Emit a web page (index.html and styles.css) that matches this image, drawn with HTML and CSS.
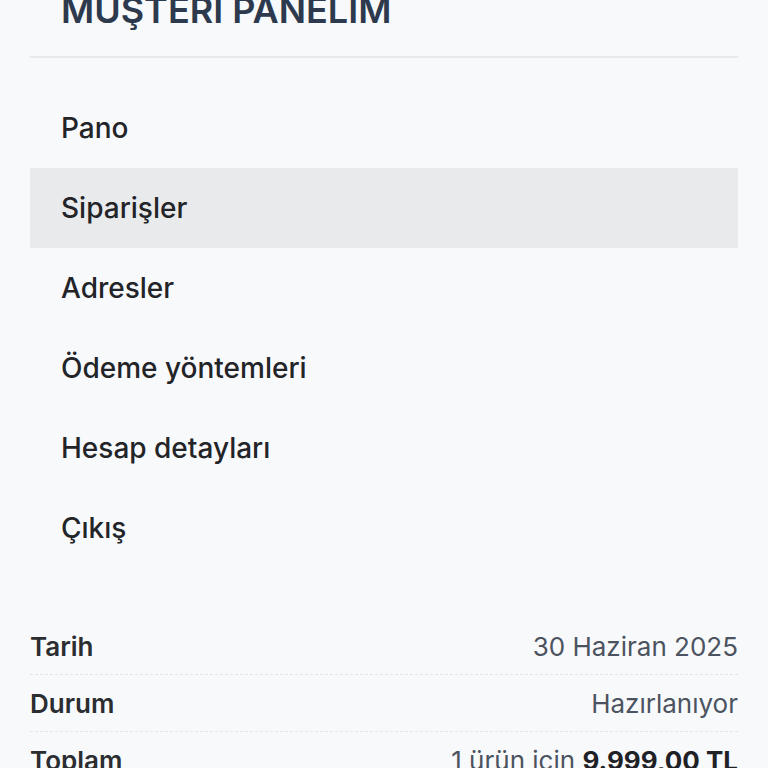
FILE: index.html
```html
<!DOCTYPE html>
<html lang="tr">
<head>
<meta charset="utf-8">
<link rel="stylesheet" href="styles.css">
</head>
<body>
<div class="page">
  <h1 class="title">MÜŞTERİ PANELİM</h1>
  <nav class="menu">
    <a class="menu-item">Pano</a>
    <a class="menu-item active">Siparişler</a>
    <a class="menu-item">Adresler</a>
    <a class="menu-item">Ödeme yöntemleri</a>
    <a class="menu-item">Hesap detayları</a>
    <a class="menu-item">Çıkış</a>
  </nav>
  <div class="order">
    <div class="row"><span class="label">Tarih</span><span class="value">30 Haziran 2025</span></div>
    <div class="row"><span class="label">Durum</span><span class="value">Hazırlanıyor</span></div>
    <div class="row"><span class="label">Toplam</span><span class="value">1 ürün için <b class="amount">9.999,00 TL</b></span></div>
  </div>
</div>
</body>
</html>
```
FILE: styles.css
```css
html, body {
  margin: 0;
  padding: 0;
  background: #f8f9fb;
  font-family: Inter, "Noto Sans", sans-serif;
}
.page {
  margin-top: -12px;
  padding: 0 30px 40px;
}
.title {
  margin: 0;
  padding: 0 0 24px 31px;
  font-size: 36px;
  line-height: 44px;
  font-weight: 600;
  color: #2d3a4e;
  border-bottom: 2px solid #e8e9ec;
}
.menu {
  display: flex;
  flex-direction: column;
  margin-top: 30px;
}
.menu-item {
  display: flex;
  align-items: center;
  height: 80px;
  padding-left: 31px;
  font-size: 28px;
  font-weight: 500;
  color: #222428;
}
.menu-item.active {
  background: #e9eaec;
}
.order {
  margin-top: 50px;
}
.row {
  display: flex;
  justify-content: space-between;
  align-items: center;
  height: 56px;
  border-bottom: 1px dashed #e3e5e8;
  font-size: 26px;
}
.label {
  font-weight: 600;
  color: #2b2d31;
}
.value {
  color: #4b5360;
}
.amount {
  font-weight: 700;
  color: #1f2126;
}
```
